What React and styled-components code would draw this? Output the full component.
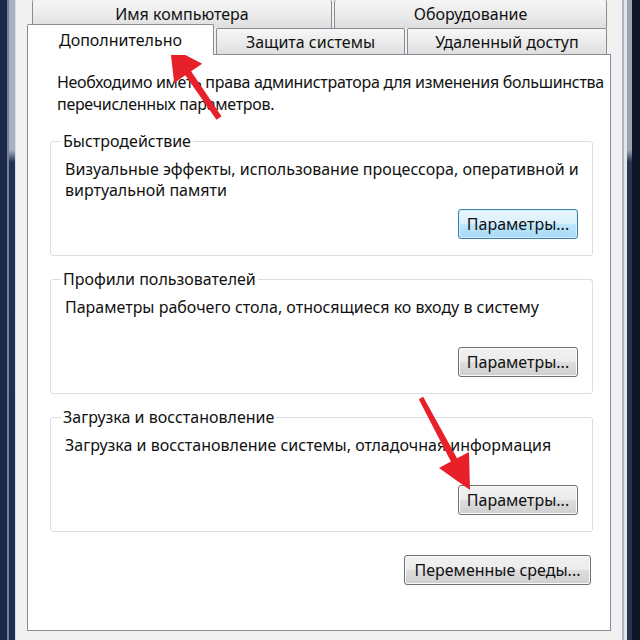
import styled, { createGlobalStyle } from "styled-components";

const GlobalStyle = createGlobalStyle`
    html, body {
        margin: 0;
        padding: 0;
        background: #101a30;
    }
    body {
        font-family: "Noto Sans", "Open Sans", sans-serif;
        color: #111;
    }
`;

const Screen = styled.div`
    position: relative;
    display: flex;
    width: 640px;
    height: 640px;
    overflow: hidden;
`;

const LeftFrame = styled.div`
    flex: none;
    width: 16px;
    background:
        linear-gradient(to right, #1b2846 0 7px, #6f7f9e 7px 9px, transparent 9px 15px, #d6dbe3 15px 16px),
        linear-gradient(to bottom, #a7b0bf 0, #a7b0bf 150px, #22315a 162px, #1f2d50 100%);
`;

const RightFrame = styled.div`
    flex: none;
    width: 18px;
    background:
        linear-gradient(to right, #aeb4bf 0 2px, #e2e5ea 2px 5px, transparent 5px 10px, #0e1628 10px 18px),
        linear-gradient(to bottom, #9aa4b5 0, #9aa4b5 150px, #2a3650 162px, #2a3650 100%);
`;

const Client = styled.div`
    flex: none;
    box-sizing: border-box;
    width: 606px;
    min-width: 0;
    display: flex;
    flex-direction: column;
    background: #f0f0f0;
    padding: 0 11px 9px 11px;
`;

const TabRow = styled.div`
    display: flex;
    align-items: flex-end;
    gap: 2px;
    height: ${p => p.$height}px;
    padding: 0 4px 0 ${p => p.$indent}px;
`;

const Tab = styled.div`
    flex: none;
    display: flex;
    align-items: center;
    justify-content: center;
    box-sizing: border-box;
    width: ${p => p.$width}px;
    height: ${p => p.$height}px;
    border: 1px solid #898c95;
    border-bottom: none;
    border-top: ${p => (p.$cut ? "none" : "1px solid #898c95")};
    border-radius: 2px 2px 0 0;
    background: linear-gradient(to bottom, #f6f6f6 0%, #ececec 50%, #dedede 100%);
    font-size: 16px;
    color: #111;
    white-space: nowrap;
`;

const ActiveTab = styled(Tab)`
    position: relative;
    z-index: 2;
    height: 31px;
    margin-bottom: -1px;
    background: #fff;
    align-items: flex-start;
    padding-top: 4px;
`;

const Panel = styled.div`
    flex: 1;
    box-sizing: border-box;
    min-width: 0;
    display: flex;
    flex-direction: column;
    background: #fff;
    border: 1px solid #898c95;
    padding: 16px 17px 0 22px;
`;

const Intro = styled.p`
    margin: 0 0 16px 7px;
    font-size: 16px;
    line-height: 22px;
    letter-spacing: -0.3px;
    white-space: nowrap;
`;

const GroupBox = styled.fieldset`
    margin: 0 0 13px;
    padding: 8px 14px 16px 14px;
    border: 1px solid #d5dfe5;
    border-radius: 3px;
    min-width: 0;
`;

const GroupTitle = styled.legend`
    margin-left: -4px;
    padding: 0 2px;
    font-size: 16px;
    line-height: 20px;
    color: #111;
`;

const GroupText = styled.p`
    margin: 0 0 8px;
    min-height: 42px;
    font-size: 16px;
    line-height: 21px;
    white-space: nowrap;
`;

const ButtonRow = styled.div`
    display: flex;
    justify-content: flex-end;
    padding-right: ${p => p.$inset || 0}px;
    margin-top: ${p => p.$offset || 0}px;
`;

const Button = styled.button`
    box-sizing: border-box;
    width: ${p => p.$width}px;
    height: 30px;
    padding: 0;
    border: 1px solid ${p => (p.$hot ? "#3c7fb1" : "#707070")};
    border-radius: 3px;
    background: ${p =>
        p.$hot
            ? "linear-gradient(to bottom, #eaf6fd 0%, #d9f0fc 48%, #bee6fd 52%, #a7d9f5 100%)"
            : "linear-gradient(to bottom, #f2f2f2 0%, #ebebeb 48%, #dddddd 52%, #cfcfcf 100%)"};
    box-shadow: inset 0 0 0 1px ${p => (p.$hot ? "#d4eefc" : "#fbfbfb")};
    font-family: inherit;
    font-size: 16px;
    color: #111;
`;

const Overlay = styled.svg`
    position: absolute;
    top: 0;
    left: 0;
    pointer-events: none;
`;

function arrowPoints(tail, tip, tailW, shaftW, headLen, headW) {
    const dx = tip[0] - tail[0];
    const dy = tip[1] - tail[1];
    const len = Math.hypot(dx, dy);
    const ux = dx / len;
    const uy = dy / len;
    const nx = -uy;
    const ny = ux;
    const bx = tip[0] - ux * headLen;
    const by = tip[1] - uy * headLen;
    const pts = [
        [tail[0] + nx * tailW / 2, tail[1] + ny * tailW / 2],
        [bx + nx * shaftW / 2, by + ny * shaftW / 2],
        [bx + nx * headW / 2, by + ny * headW / 2],
        tip,
        [bx - nx * headW / 2, by - ny * headW / 2],
        [bx - nx * shaftW / 2, by - ny * shaftW / 2],
        [tail[0] - nx * tailW / 2, tail[1] - ny * tailW / 2],
    ];
    return pts.map(p => `${p[0].toFixed(1)},${p[1].toFixed(1)}`).join(" ");
}

const groups = [
    {
        title: "Быстродействие",
        text: ["Визуальные эффекты, использование процессора, оперативной и", "виртуальной памяти"],
        hot: true,
    },
    {
        title: "Профили пользователей",
        text: ["Параметры рабочего стола, относящиеся ко входу в систему"],
    },
    {
        title: "Загрузка и восстановление",
        text: ["Загрузка и восстановление системы, отладочная информация"],
    },
];

function App() {
    return (
        <Screen>
            <GlobalStyle />
            <LeftFrame />
            <Client>
                <TabRow $height={28} $indent={5}>
                    <Tab $width={300} $height={28} $cut>Имя компьютера</Tab>
                    <Tab $width={273} $height={28} $cut>Оборудование</Tab>
                </TabRow>
                <TabRow $height={26} $indent={0}>
                    <ActiveTab $width={187}>Дополнительно</ActiveTab>
                    <Tab $width={189} $height={26}>Защита системы</Tab>
                    <Tab $width={200} $height={26}>Удаленный доступ</Tab>
                </TabRow>
                <Panel>
                    <Intro>
                        Необходимо иметь права администратора для изменения большинства
                        <br />
                        перечисленных параметров.
                    </Intro>
                    {groups.map(g => (
                        <GroupBox key={g.title}>
                            <GroupTitle>{g.title}</GroupTitle>
                            <GroupText>
                                {g.text.map((line, i) => (
                                    <span key={i}>
                                        {i > 0 && <br />}
                                        {line}
                                    </span>
                                ))}
                            </GroupText>
                            <ButtonRow>
                                <Button $width={120} $hot={g.hot}>Параметры...</Button>
                            </ButtonRow>
                        </GroupBox>
                    ))}
                    <ButtonRow $inset={2} $offset={10}>
                        <Button $width={187}>Переменные среды...</Button>
                    </ButtonRow>
                </Panel>
            </Client>
            <RightFrame />
            <Overlay width="640" height="640" viewBox="0 0 640 640">
                <polygon points={arrowPoints([219, 118], [170, 47], 6, 7, 32, 34)} fill="#e8202a" />
                <polygon points={arrowPoints([421, 398], [470, 490], 5, 7, 34, 34)} fill="#e8202a" />
            </Overlay>
        </Screen>
    );
}

export default App;
